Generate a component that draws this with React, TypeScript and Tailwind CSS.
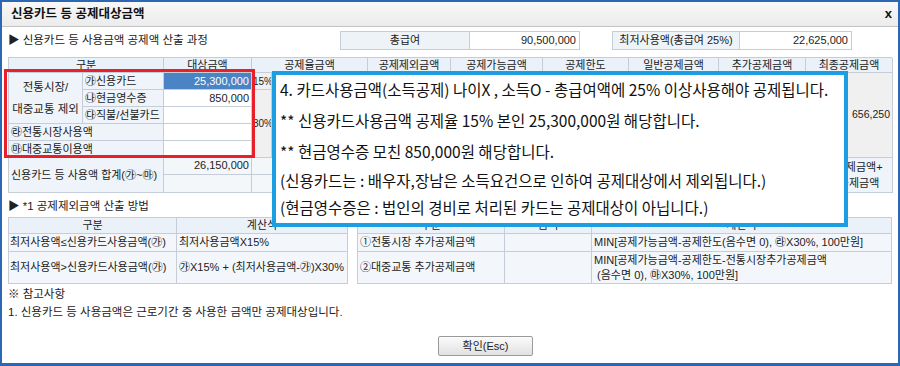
import * as React from "react";

const CELL = "border-r border-b border-[#c5ced8] flex items-center overflow-hidden whitespace-nowrap";
const HEAD = "border-r border-b border-[#c5ced8] flex items-center justify-center bg-[#eaf1f9] whitespace-nowrap";

const NOTES = [
  { text: "4. 카드사용금액(소득공제) 나이X , 소득O - 총급여액에 25% 이상사용해야 공제됩니다.", h: "h-[30px]" },
  { text: "** 신용카드사용금액 공제율 15% 본인 25,300,000원 해당합니다.", h: "h-[32px]" },
  { text: "** 현금영수증 모친 850,000원 해당합니다.", h: "h-[30px]" },
  { text: "(신용카드는 : 배우자,장남은 소득요건으로 인하여 공제대상에서 제외됩니다.)", h: "h-[27px]" },
  { text: "(현금영수증은 : 법인의 경비로 처리된 카드는 공제대상이 아닙니다.)", h: "h-[27px]" },
];

function UsageTable() {
  return (
    <div className="mt-[7px] grid grid-cols-[74px_81px_88px_20px_96px_83px_92px_86px_90px_87px_87px] grid-rows-[15px_17px_17px_17px_17px_17px_17px_18px] border-t border-l border-[#c5ced8]">
      {/* header */}
      <div className={`${HEAD} col-span-2`}>구분</div>
      <div className={HEAD}>대상금액</div>
      <div className={`${HEAD} col-span-2`}>공제율금액</div>
      <div className={HEAD}>공제제외금액</div>
      <div className={HEAD}>공제가능금액</div>
      <div className={HEAD}>공제한도</div>
      <div className={HEAD}>일반공제금액</div>
      <div className={HEAD}>추가공제금액</div>
      <div className={HEAD}>최종공제금액</div>

      {/* rows 1-5 */}
      <div className={`${CELL} row-span-3 col-start-1 row-start-2 bg-[#eef4fa] justify-center text-center whitespace-normal leading-[22px] text-[11.5px]`}>
        전통시장/
        <br />
        대중교통 제외
      </div>
      <div className={`${CELL} col-start-2 row-start-2 bg-[#eef4fa] pl-[2px]`}>㉮신용카드</div>
      <div className={`${CELL} col-start-3 row-start-2 bg-[#4a84c4] text-white justify-end pr-[2px]`}>25,300,000</div>
      <div className={`${CELL} col-start-2 row-start-3 bg-[#eef4fa] pl-[2px]`}>㉯현금영수증</div>
      <div className={`${CELL} col-start-3 row-start-3 bg-white justify-end pr-[2px]`}>850,000</div>
      <div className={`${CELL} col-start-2 row-start-4 bg-[#eef4fa] pl-[2px]`}>㉰직불/선불카드</div>
      <div className={`${CELL} col-start-3 row-start-4 bg-white`} />
      <div className={`${CELL} col-span-2 col-start-1 row-start-5 bg-[#eef4fa] pl-[2px]`}>㉱전통시장사용액</div>
      <div className={`${CELL} col-start-3 row-start-5 bg-white`} />
      <div className={`${CELL} col-span-2 col-start-1 row-start-6 bg-[#eef4fa] pl-[2px]`}>㉲대중교통이용액</div>
      <div className={`${CELL} col-start-3 row-start-6 bg-white`} />

      <div className={`${CELL} col-start-4 row-start-2 bg-[#f0f0f0] text-[10px] pl-[1px]`}>15%</div>
      <div className={`${CELL} col-start-5 row-start-2 bg-[#f0f0f0]`} />
      <div className={`${CELL} col-start-4 row-start-3 row-span-4 bg-[#f0f0f0] text-[10px] pl-[1px]`}>30%</div>
      <div className={`${CELL} col-start-5 row-start-3 row-span-4 bg-[#f0f0f0]`} />
      <div className={`${CELL} col-start-6 row-start-2 row-span-5 bg-[#f0f0f0]`} />
      <div className={`${CELL} col-start-7 row-start-2 row-span-5 bg-[#f0f0f0]`} />
      <div className={`${CELL} col-start-8 row-start-2 row-span-5 bg-[#f0f0f0]`} />
      <div className={`${CELL} col-start-9 row-start-2 row-span-5 bg-[#f0f0f0]`} />
      <div className={`${CELL} col-start-10 row-start-2 row-span-5 bg-[#f0f0f0]`} />
      <div className={`${CELL} col-start-11 row-start-2 row-span-5 bg-[#f0f0f0] justify-end pr-[2px] text-[10.5px]`}>656,250</div>

      {/* sum rows */}
      <div className={`${CELL} col-span-2 col-start-1 row-start-7 row-span-2 bg-[#eef4fa] pl-[2px]`}>신용카드 등 사용액 합계(㉮~㉲)</div>
      <div className={`${CELL} col-start-3 row-start-7 bg-[#f4f7fa] justify-end items-start pr-[2px] leading-[14px]`}>26,150,000</div>
      <div className={`${CELL} col-start-3 row-start-8 bg-[#f4f7fa]`} />
      <div className={`${CELL} col-span-2 col-start-4 row-start-7 bg-[#f4f7fa]`} />
      <div className={`${CELL} col-span-2 col-start-4 row-start-8 bg-[#f4f7fa]`} />
      <div className={`${CELL} col-start-6 row-start-7 row-span-2 bg-[#f4f7fa]`} />
      <div className={`${CELL} col-start-7 row-start-7 row-span-2 bg-[#f4f7fa]`} />
      <div className={`${CELL} col-start-8 row-start-7 row-span-2 bg-[#f4f7fa]`} />
      <div className={`${CELL} col-start-9 row-start-7 row-span-2 bg-[#f4f7fa]`} />
      <div className={`${CELL} col-start-10 row-start-7 row-span-2 bg-[#f4f7fa]`} />
      <div className={`${CELL} col-start-11 row-start-7 row-span-2 bg-[#eef4fa] justify-center text-center whitespace-normal leading-[16px]`}>
        일반공제금액+
        <br />
        추가공제금액
      </div>
    </div>
  );
}

function MethodTables() {
  return (
    <div className="mt-[3px] flex gap-[9px]">
      <div className="grid w-[340px] grid-cols-[168px_171px] grid-rows-[16px_18px_32px] border-t border-l border-[#c5ced8]">
        <div className={HEAD}>구분</div>
        <div className={HEAD}>계산식</div>
        <div className={`${CELL} bg-[#f3f7fc] pl-[1px]`}>최저사용액≤신용카드사용금액(㉮)</div>
        <div className={`${CELL} bg-[#f3f7fc] pl-[2px]`}>최저사용금액X15%</div>
        <div className={`${CELL} bg-[#f3f7fc] pl-[1px]`}>최저사용액&gt;신용카드사용금액(㉮)</div>
        <div className={`${CELL} bg-[#f3f7fc] pl-[2px]`}>㉮X15% + (최저사용금액-㉮)X30%</div>
      </div>
      <div className="grid w-[535px] grid-cols-[147px_87px_300px] grid-rows-[16px_18px_32px] border-t border-l border-[#c5ced8]">
        <div className={HEAD}>구분</div>
        <div className={HEAD}>금액</div>
        <div className={HEAD}>계산식</div>
        <div className={`${CELL} bg-[#f3f7fc] pl-[2px]`}>①전통시장 추가공제금액</div>
        <div className={`${CELL} bg-[#f3f7fc]`} />
        <div className={`${CELL} bg-[#f3f7fc] pl-[2px]`}>MIN[공제가능금액-공제한도(음수면 0), ㉱X30%, 100만원]</div>
        <div className={`${CELL} bg-[#f3f7fc] pl-[2px]`}>②대중교통 추가공제금액</div>
        <div className={`${CELL} bg-[#f3f7fc]`} />
        <div className={`${CELL} bg-[#f3f7fc] pl-[2px] whitespace-normal leading-[15px]`}>
          <div>
            MIN[공제가능금액-공제한도-전통시장추가공제금액
            <br />
            &nbsp;(음수면 0), ㉲X30%, 100만원]
          </div>
        </div>
      </div>
    </div>
  );
}

export default function App() {
  return (
    <div className="relative w-[900px] h-[366px] overflow-hidden bg-white border-x-2 border-t-2 border-b-[3px] border-[#2b67b3] font-['Liberation_Sans','Noto_Sans_CJK_KR',sans-serif] text-[11px] text-[#222]">
      <div className="h-[25px] flex items-center justify-between pl-[9px] pr-[6px] bg-gradient-to-b from-[#f8f8f8] to-[#ececec] border-b border-[#c4c4c4]">
        <span className="text-[12.5px] font-bold text-[#111]">신용카드 등 공제대상금액</span>
        <span className="text-[13px] font-bold text-[#111]">x</span>
      </div>

      <div className="px-[6px]">
        <div className="mt-[4px] flex h-[19px] items-center">
          <div className="w-[332px] text-[11.5px]">▶ 신용카드 등 사용금액 공제액 산출 과정</div>
          <div className="flex h-full w-[130px] items-center justify-center bg-[#eef3f8] border border-[#c5ced8]">총급여</div>
          <div className="flex h-full w-[110px] items-center justify-end pr-[3px] border border-l-0 border-[#c5ced8]">90,500,000</div>
          <div className="ml-[32px] flex h-full w-[128px] items-center justify-center bg-[#eef3f8] border border-[#c5ced8]">최저사용액(총급여 25%)</div>
          <div className="flex h-full w-[112px] items-center justify-end pr-[3px] border border-l-0 border-[#c5ced8]">22,625,000</div>
        </div>

        <UsageTable />

        <div className="mt-[7px] h-[14px] flex items-center text-[11.5px]">▶ *1 공제제외금액 산출 방법</div>

        <MethodTables />

        <div className="mt-[2px] h-[18px] flex items-center text-[11.5px]">※ 참고사항</div>
        <div className="h-[18px] flex items-center text-[11.5px]">1. 신용카드 등 사용금액은 근로기간 중 사용한 금액만 공제대상입니다.</div>

        <div className="mt-[14px] ml-[430px] flex h-[20px] w-[95px] items-center justify-center rounded-[2px] border border-[#9a9a9a] bg-gradient-to-b from-[#fbfbfb] to-[#e1e1e1]">
          확인(Esc)
        </div>
      </div>

      {/* red highlight */}
      <div className="absolute left-[2px] top-[67px] w-[251px] h-[89px] border-[3px] border-[#e8202a]" />

      {/* blue note */}
      <div className="absolute left-[270px] top-[69px] w-[576px] h-[156px] border-[4px] border-[#1b9ee2] bg-white pl-[4px] font-['Noto_Sans_CJK_KR',sans-serif] text-[15.5px] text-[#111]">
        {NOTES.map((n) => (
          <div key={n.text} className={`${n.h} flex items-center whitespace-nowrap`}>
            {n.text}
          </div>
        ))}
      </div>
    </div>
  );
}
